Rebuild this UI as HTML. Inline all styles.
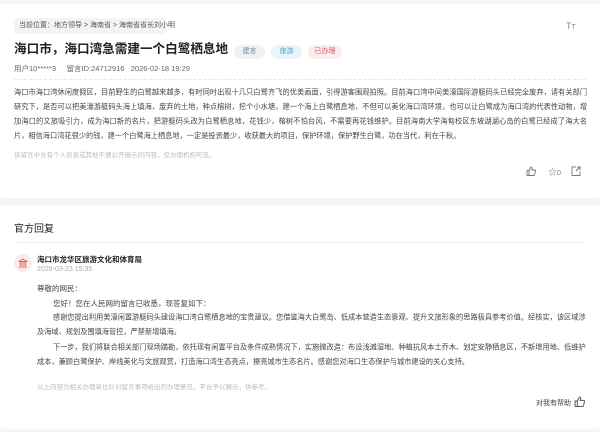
<!DOCTYPE html>
<html><head><meta charset="utf-8"><style>
*{margin:0;padding:0;box-sizing:border-box}
body{width:600px;height:432px;background:#f4f5f7;font-family:"Liberation Sans","Noto Sans CJK SC",sans-serif;color:#333;position:relative;overflow:hidden}
.card{position:absolute;left:0;width:600px;background:#fff;border-radius:4px}
.a{position:absolute;white-space:nowrap}
.p{position:absolute;font-size:10px;color:#444;line-height:20.1px;text-align:justify;word-break:break-all;transform:scale(0.72);transform-origin:0 0}
.tag{position:absolute;top:45px;height:14px;border-radius:7px;font-size:7px;line-height:14px;text-align:center}
</style></head><body>
<div class="card" style="top:4px;height:194px"></div>
<div class="card" style="top:205px;height:224px"></div>

<div class="a" style="left:14px;top:18px;width:152px;height:16px;background:#f3f4f6;border-radius:2px;font-size:7px;line-height:16px;color:#555;padding-left:5px">当前位置：地方领导 &gt; 海南省 &gt; 海南省省长刘小明</div>
<div class="a" style="left:566px;top:21px;font-size:9px;color:#888">T<span style="font-size:7px">T</span></div>
<div class="a" style="left:14px;top:40px;font-size:12.6px;font-weight:bold;color:#222;line-height:18px">海口市，海口湾急需建一个白鹭栖息地</div>
<div class="tag" style="left:234px;width:31px;background:#eef1f5;color:#7a8699">建言</div>
<div class="tag" style="left:271px;width:31px;background:#eaf5fb;color:#4a9fd0">旅游</div>
<div class="tag" style="left:308px;width:34px;background:#fdeced;color:#e0505a">已办理</div>
<div class="a" style="left:14px;top:63px;font-size:7.5px;color:#666">用户10*****3 &nbsp;&nbsp;&nbsp; 留言ID:24712916 &nbsp;&nbsp;2026-02-18 19:29</div>
<div class="a" style="left:14px;top:79px;width:572px;border-top:1px dashed #e6e6e6"></div>

<div class="p" style="left:14px;top:86px;width:796px">海口市海口湾休闲度假区，目前野生的白鹭越来越多，有时同时出现十几只白鹭齐飞的优美画面，引得游客围观拍照。目前海口湾中间美濠国际游艇码头已经完全废弃，请有关部门研究下，是否可以把美濠游艇码头海上填海，废弃的土地，种点榕树，挖个小水塘，建一个海上白鹭栖息地，不但可以美化海口湾环境，也可以让白鹭成为海口湾的代表性动物，增加海口的文旅吸引力，成为海口新的名片，把游艇码头改为白鹭栖息地，花钱少，榕树不怕台风，不需要再花钱维护。目前海南大学海甸校区东坡湖湖心岛的白鹭已经成了海大名片，相信海口湾花很少的钱，建一个白鹭海上栖息地，一定是投资最少，收获最大的项目，保护环境，保护野生白鹭，功在当代，利在千秋。</div>
<div class="a" style="left:14px;top:149px;font-size:6.5px;color:#bbb">该留言中含有个人信息或其他不便公开展示的内容，仅办理机构可见。</div>
<svg class="a" style="left:526px;top:166px" width="10" height="10" viewBox="0 0 10 10" fill="none" stroke="#777" stroke-width="0.9"><path d="M1 4.5h2v5H1zM3 4.5L5 1c1 0 1.3.8 1 2L5.7 4h3c.6 0 1 .5.8 1.1L8.6 9c-.1.3-.4.5-.7.5H3"/></svg>
<div class="a" style="left:548px;top:165px;font-size:9px;color:#777">☆<span style="font-size:7px">0</span></div>
<svg class="a" style="left:571px;top:166px" width="10" height="10" viewBox="0 0 10 10" fill="none" stroke="#777" stroke-width="0.9"><path d="M5 1H1v8.5h8V5.5M6 1h3v3M9 1L5 5"/></svg>

<div class="a" style="left:14px;top:220px;font-size:10px;color:#222">官方回复</div>
<div class="a" style="left:14px;top:242px;width:572px;border-top:1px solid #eee"></div>
<div class="a" style="left:14px;top:254px;width:18px;height:18px;border-radius:50%;background:#fdeaea"></div>
<svg class="a" style="left:18px;top:258px" width="10" height="10" viewBox="0 0 10 10" fill="none" stroke="#d66" stroke-width="0.9"><path d="M1 3.5L5 1l4 2.5zM2.5 4v4M4 4v4M6 4v4M7.5 4v4M1 9h8"/></svg>
<div class="a" style="left:37px;top:254px;font-size:7.5px;font-weight:bold;color:#222">海口市龙华区旅游文化和体育局</div>
<div class="a" style="left:37px;top:266px;font-size:7px;color:#aaa">2026-03-23 15:35</div>
<div class="a" style="left:37px;top:283px;font-size:7.5px;color:#444">尊敬的网民：</div>
<div class="a" style="left:53px;top:298px;font-size:7.5px;color:#444">您好！您在人民网的留言已收悉，现答复如下：</div>
<div class="p" style="left:37px;top:311px;width:762px;text-indent:22px">感谢您提出利用美濠闲置游艇码头建设海口湾白鹭栖息地的宝贵建议。您借鉴海大白鹭岛、低成本营造生态景观、提升文旅形象的思路极具参考价值。经核实，该区域涉及海域、规划及围填海管控，严禁新增填海。</div>
<div class="p" style="left:37px;top:341px;width:762px;text-indent:22px">下一步，我们将联合相关部门现场踏勘，依托现有闲置平台及条件成熟情况下，实施微改造：布设浅滩湿地、种植抗风本土乔木、划定安静栖息区，不新增用地、低维护成本，兼顾白鹭保护、岸线美化与文旅观赏，打造海口湾生态亮点，擦亮城市生态名片。感谢您对海口生态保护与城市建设的关心支持。</div>
<div class="a" style="left:37px;top:381px;font-size:6.5px;color:#bbb">以上内容为相关办理单位针对留言事项给出的办理意见，平台予以展示，供参考。</div>
<div class="a" style="left:536px;top:398px;font-size:7px;color:#444">对我有帮助</div>
<svg class="a" style="left:574px;top:396px" width="11" height="11" viewBox="0 0 10 10" fill="none" stroke="#555" stroke-width="0.9"><path d="M1 4.5h2v5H1zM3 4.5L5 1c1 0 1.3.8 1 2L5.7 4h3c.6 0 1 .5.8 1.1L8.6 9c-.1.3-.4.5-.7.5H3"/></svg>
</body></html>
